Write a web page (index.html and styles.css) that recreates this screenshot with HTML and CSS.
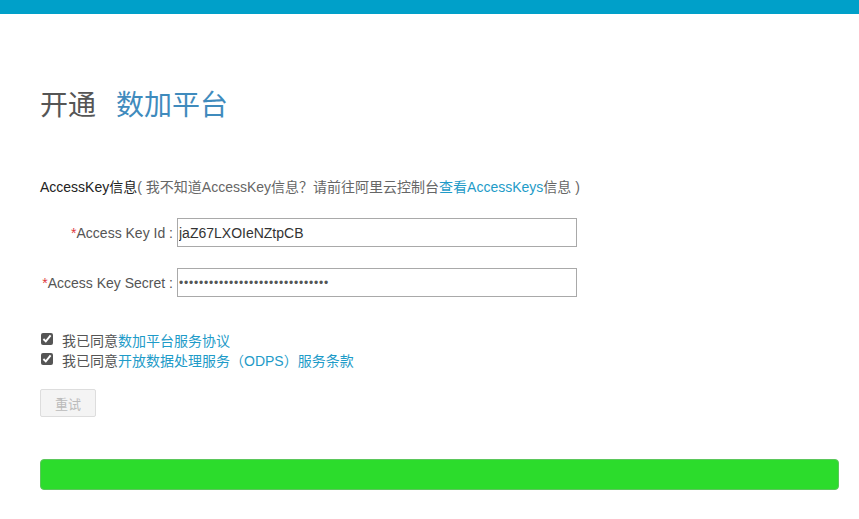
FILE: index.html
```html
<!DOCTYPE html>
<html>
<head>
<meta charset="utf-8">
<link rel="stylesheet" href="styles.css">
</head>
<body>
<div class="topbar"></div>
<div class="page">
  <h1 class="title"><span class="t1">开通</span><span class="t2">数加平台</span></h1>
  <p class="info"><span class="info-main">AccessKey信息</span><span class="info-sub">( 我不知道AccessKey信息？请前往阿里云控制台<a class="link" href="#">查看AccessKeys</a>信息 )</span></p>
  <div class="form">
    <div class="row">
      <label class="label"><span class="req">*</span>Access Key Id :</label>
      <input class="input" type="text" value="jaZ67LXOIeNZtpCB">
    </div>
    <div class="row">
      <label class="label"><span class="req">*</span>Access Key Secret :</label>
      <input class="input" type="password" value="abcdefghijklmnopqrstuvwxyz0123">
    </div>
  </div>
  <div class="agree">
    <label class="check"><input type="checkbox" checked><span>我已同意<a class="link" href="#">数加平台服务协议</a></span></label>
    <label class="check"><input type="checkbox" checked><span>我已同意<a class="link" href="#">开放数据处理服务（ODPS）服务条款</a></span></label>
  </div>
  <button class="retry" disabled>重试</button>
  <div class="progress"></div>
</div>
</body>
</html>
```

FILE: styles.css
```css
* { box-sizing: border-box; }
body {
  margin: 0;
  background: #fff;
  font-family: "Liberation Sans", "Noto Sans CJK SC", sans-serif;
  color: #333;
}
.topbar {
  height: 14px;
  background: #00a0c9;
}
.page {
  padding: 0 20px 0 40px;
}
.title {
  margin: 74px 0 0;
  font-size: 28px;
  font-weight: normal;
  line-height: 36px;
  display: flex;
  gap: 20px;
}
.t1 { color: #555; }
.t2 { color: #3f8bbd; }
.info {
  margin: 53px 0 0;
  font-size: 14px;
  line-height: 20px;
}
.info-main { color: #222; }
.info-sub { color: #666; }
.link {
  color: #1e9bc8;
  text-decoration: none;
}
.form {
  margin-top: 21px;
  display: flex;
  flex-direction: column;
  gap: 21px;
}
.row {
  display: flex;
  align-items: center;
  gap: 4px;
}
.label {
  width: 133px;
  text-align: right;
  font-size: 14px;
  color: #555;
}
.req { color: #e0383e; }
.input {
  width: 400px;
  height: 29px;
  border: 1px solid #a9a9a9;
  padding: 0 1px;
  font-family: "Liberation Sans", sans-serif;
  font-size: 14px;
  color: #333;
  outline: none;
}
.input[type="password"] {
  font-size: 12px;
  letter-spacing: 0.8px;
  color: #555;
}
.agree {
  margin-top: 33px;
  display: flex;
  flex-direction: column;
}
.check {
  display: flex;
  align-items: center;
  height: 20px;
  font-size: 14px;
  color: #555;
}
.check input {
  margin: 0 9px 0 1px;
  width: 12px;
  height: 12px;
  accent-color: #555;
  position: relative;
  top: -1px;
}
.retry {
  margin-top: 19px;
  width: 56px;
  height: 28px;
  border: 1px solid #ddd;
  background: #f4f4f4;
  color: #bbb;
  font-size: 13px;
  font-family: "Liberation Sans", "Noto Sans CJK SC", sans-serif;
  border-radius: 2px;
  padding: 0;
  display: block;
}
.progress {
  margin-top: 42px;
  height: 31px;
  background: #2cdc2c;
  border: 1px solid #5bc75b;
  border-radius: 4px;
}
```
